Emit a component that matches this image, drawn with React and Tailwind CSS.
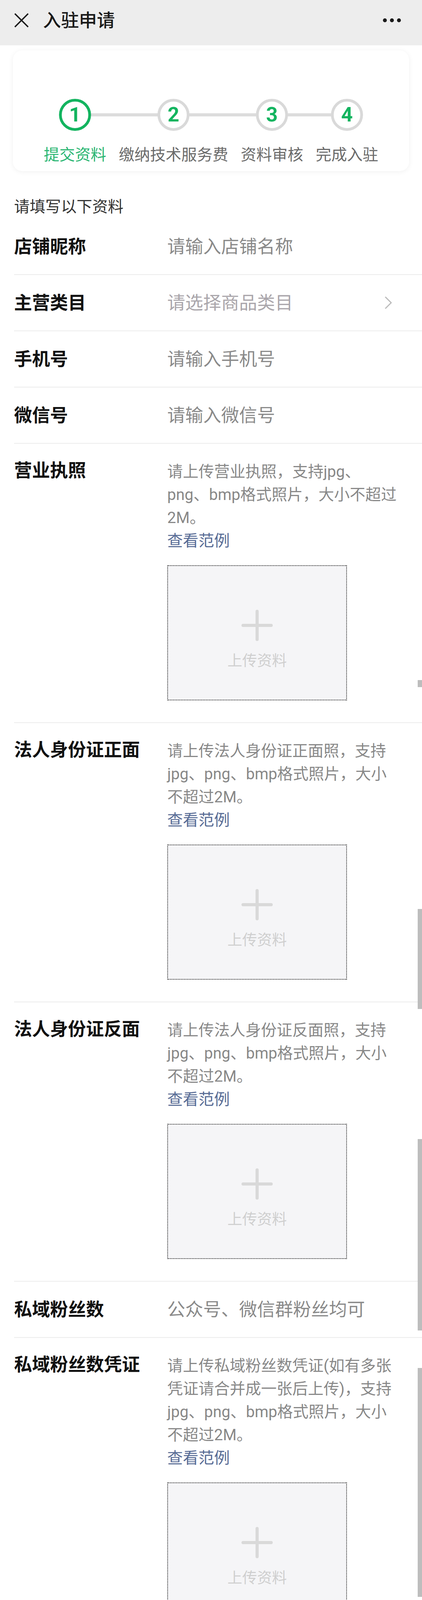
import React from "react";

const steps = ["提交资料", "缴纳技术服务费", "资料审核", "完成入驻"];

function Header() {
  return (
    <div className="flex h-[116px] items-center bg-[#ededed] pb-[12px] pl-[36px] pr-[54px]">
      <svg width="38" height="38" viewBox="0 0 38 38">
        <path d="M2 2L36 36M36 2L2 36" stroke="#1a1a1a" strokeWidth="3.5" />
      </svg>
      <div className="ml-[36px] flex-1 text-[46px] font-medium leading-none text-[#191919]">
        入驻申请
      </div>
      <div className="flex gap-[8px]">
        <span className="h-[10px] w-[10px] rounded-full bg-[#1a1a1a]" />
        <span className="h-[10px] w-[10px] rounded-full bg-[#1a1a1a]" />
        <span className="h-[10px] w-[10px] rounded-full bg-[#1a1a1a]" />
      </div>
    </div>
  );
}

function Steps() {
  return (
    <div className="mx-[33px] mt-[13px] rounded-[24px] bg-white pb-[17px] pt-[124px] shadow-[0_2px_14px_rgba(0,0,0,0.06)]">
      <div className="relative mx-auto flex w-fit gap-[32px]">
        <div className="absolute left-[80px] right-[80px] top-[37px] h-[8px] bg-[#dcdcdc]" />
        {steps.map((s, i) => (
          <div key={s} className="flex flex-col items-center">
            <div
              className={
                i === 0
                  ? "relative flex h-[82px] w-[82px] items-center justify-center rounded-full border-[7px] border-[#13b45f] bg-white text-[52px] font-bold leading-none text-[#13b45f]"
                  : "relative flex h-[82px] w-[82px] items-center justify-center rounded-full border-[7px] border-[#d9d9d9] bg-white text-[52px] font-bold leading-none text-[#13b45f]"
              }
            >
              {i + 1}
            </div>
            <div
              className={
                i === 0
                  ? "mt-[38px] text-[40px] leading-[48px] text-[#2bb673]"
                  : "mt-[38px] text-[40px] leading-[48px] text-[#6b6b6b]"
              }
            >
              {s}
            </div>
          </div>
        ))}
      </div>
    </div>
  );
}

function Row({ label, value, light, arrow }) {
  return (
    <div className="ml-[36px] flex h-[144px] items-center border-b-2 border-[#ececec] pr-[76px]">
      <div className="w-[392px] shrink-0 text-[46px] font-bold leading-none text-[#111]">{label}</div>
      <div
        className={
          light
            ? "flex-1 text-[46px] leading-none text-[#aaa6ab]"
            : "flex-1 text-[46px] leading-none text-[#8a8a8a]"
        }
      >
        {value}
      </div>
      {arrow && (
        <svg width="20" height="34" viewBox="0 0 20 34">
          <polyline points="2,2 17,17 2,32" fill="none" stroke="#bcbcbc" strokeWidth="3" />
        </svg>
      )}
    </div>
  );
}

function UploadBox() {
  return (
    <div className="mt-[33px] flex h-[346px] w-[460px] flex-col items-center border-2 border-dotted border-[#222] bg-[#f5f5f7] pt-[112px]">
      <svg width="80" height="80" viewBox="0 0 80 80">
        <path d="M40 4V76M4 40H76" stroke="#d9d9d9" strokeWidth="8" strokeLinecap="round" />
      </svg>
      <div className="mt-[26px] text-[38px] leading-[48px] text-[#cfcfcf]">上传资料</div>
    </div>
  );
}

function UploadSection({ label, lines, example = true, last = false }) {
  return (
    <div
      className={
        last
          ? "ml-[36px] flex pt-[42px]"
          : "ml-[36px] flex border-b-2 border-[#ececec] pb-[56px] pt-[42px]"
      }
    >
      <div className="w-[392px] shrink-0 text-[46px] font-bold leading-[52px] text-[#111]">{label}</div>
      <div>
        <div className="whitespace-nowrap text-[40px] leading-[59px] text-[#888]">
          {lines.map((l) => (
            <div key={l}>{l}</div>
          ))}
        </div>
        {example && <div className="text-[40px] leading-[59px] text-[#576b95]">查看范例</div>}
        <UploadBox />
      </div>
    </div>
  );
}

export default function App() {
  return (
    <div className="relative min-h-[5115px] w-full bg-white font-['Roboto','Noto_Sans_CJK_SC',sans-serif]">
      <Header />
      <Steps />
      <div className="ml-[36px] pb-[4px] pt-[66px] text-[40px] leading-[52px] text-[#333]">请填写以下资料</div>
      <Row label="店铺昵称" value="请输入店铺名称" />
      <Row label="主营类目" value="请选择商品类目" light arrow />
      <Row label="手机号" value="请输入手机号" />
      <Row label="微信号" value="请输入微信号" />
      <UploadSection
        label="营业执照"
        lines={["请上传营业执照，支持jpg、", "png、bmp格式照片，大小不超过", "2M。"]}
      />
      <UploadSection
        label="法人身份证正面"
        lines={["请上传法人身份证正面照，支持", "jpg、png、bmp格式照片，大小", "不超过2M。"]}
      />
      <UploadSection
        label="法人身份证反面"
        lines={["请上传法人身份证反面照，支持", "jpg、png、bmp格式照片，大小", "不超过2M。"]}
      />
      <Row label="私域粉丝数" value="公众号、微信群粉丝均可" />
      <UploadSection
        label="私域粉丝数凭证"
        lines={[
          "请上传私域粉丝数凭证(如有多张",
          "凭证请合并成一张后上传)，支持",
          "jpg、png、bmp格式照片，大小",
          "不超过2M。",
        ]}
      />
      <UploadSection
        label="其他（选填）"
        example={false}
        last
        lines={[
          "可上传品牌授权书/商标证、商品",
          "许可证或3C证书等辅助证明材",
          "料。支持jpg、png、bmp格式照",
          "片，大小不超过2M。",
        ]}
      />
      <div className="px-[43px] pb-[42px] pt-[87px]">
        <button className="flex h-[130px] w-full items-center justify-center rounded-[14px] bg-[#07c160] text-[50px] text-white">
          确认
        </button>
      </div>

      {/* scroll indicator strips from the stitched capture */}
      <div className="absolute right-0 top-[1741px] h-[18px] w-[11px] bg-[#bdbdbd]" />
      <div className="absolute right-0 top-[2327px] h-[256px] w-[11px] bg-[#bdbdbd]" />
      <div className="absolute right-0 top-[2916px] h-[490px] w-[11px] bg-[#bdbdbd]" />
      <div className="absolute right-0 top-[3502px] h-[586px] w-[11px] bg-[#bdbdbd]" />
      <div className="absolute right-0 top-[4240px] h-[875px] w-[11px] bg-[#bdbdbd]" />
    </div>
  );
}
